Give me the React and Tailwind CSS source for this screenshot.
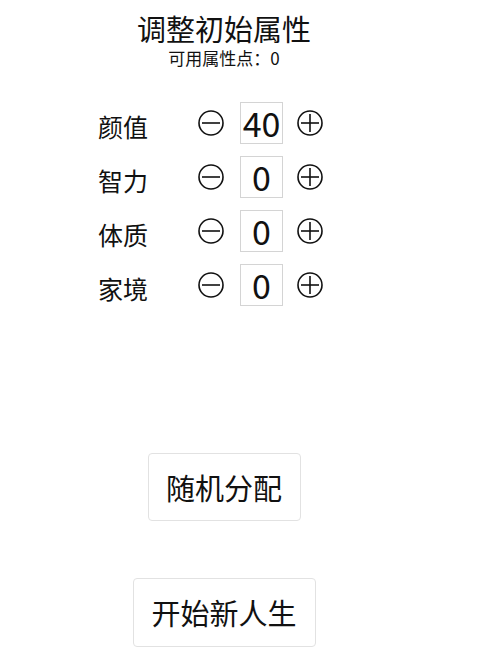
import React from "react";

const Minus = () => (
  <svg width="26" height="26" viewBox="0 0 26 26" className="block">
    <circle cx="13" cy="13" r="12" fill="none" stroke="#111" strokeWidth="1.6" />
    <line x1="4" y1="13" x2="22" y2="13" stroke="#111" strokeWidth="1.6" />
  </svg>
);
const Plus = () => (
  <svg width="26" height="26" viewBox="0 0 26 26" className="block">
    <circle cx="13" cy="13" r="12" fill="none" stroke="#111" strokeWidth="1.6" />
    <line x1="4" y1="13" x2="22" y2="13" stroke="#111" strokeWidth="1.6" />
    <line x1="13" y1="4" x2="13" y2="22" stroke="#111" strokeWidth="1.6" />
  </svg>
);

const rows = [
  ["颜值", "40"],
  ["智力", "0"],
  ["体质", "0"],
  ["家境", "0"],
];

export default function App() {
  return (
    <div
      className="w-[500px] h-[670px] bg-white text-[#111]"
      style={{ fontFamily: '"Noto Sans CJK SC", "Noto Sans", sans-serif' }}
    >
      <div className="w-[448px] flex flex-col items-center">
        <div className="mt-[11px] text-[29px] leading-[34px]">调整初始属性</div>
        <div className="mt-[3px] text-[17px] leading-[20px]">可用属性点：0</div>
      </div>
      <div className="mt-[34px] pl-[98px] flex flex-col gap-[12px]">
        {rows.map(([label, v]) => (
          <div key={label} className="flex items-center h-[42px]">
            <div className="w-[100px] text-[25px] leading-[30px] pt-[6px]">{label}</div>
            <Minus />
            <div className="ml-[16px] w-[43px] h-[42px] border border-[#d4d4d4] flex items-center justify-center text-[34px] leading-none">
              {v}
            </div>
            <div className="ml-[14px]">
              <Plus />
            </div>
          </div>
        ))}
      </div>
      <div className="w-[448px] flex flex-col items-center">
        <button className="mt-[147px] w-[153px] h-[68px] border border-[#e2e2e2] rounded-[4px] bg-white text-[29px] leading-none">
          随机分配
        </button>
        <button className="mt-[57px] w-[183px] h-[69px] border border-[#e2e2e2] rounded-[4px] bg-white text-[29px] leading-none">
          开始新人生
        </button>
      </div>
    </div>
  );
}
